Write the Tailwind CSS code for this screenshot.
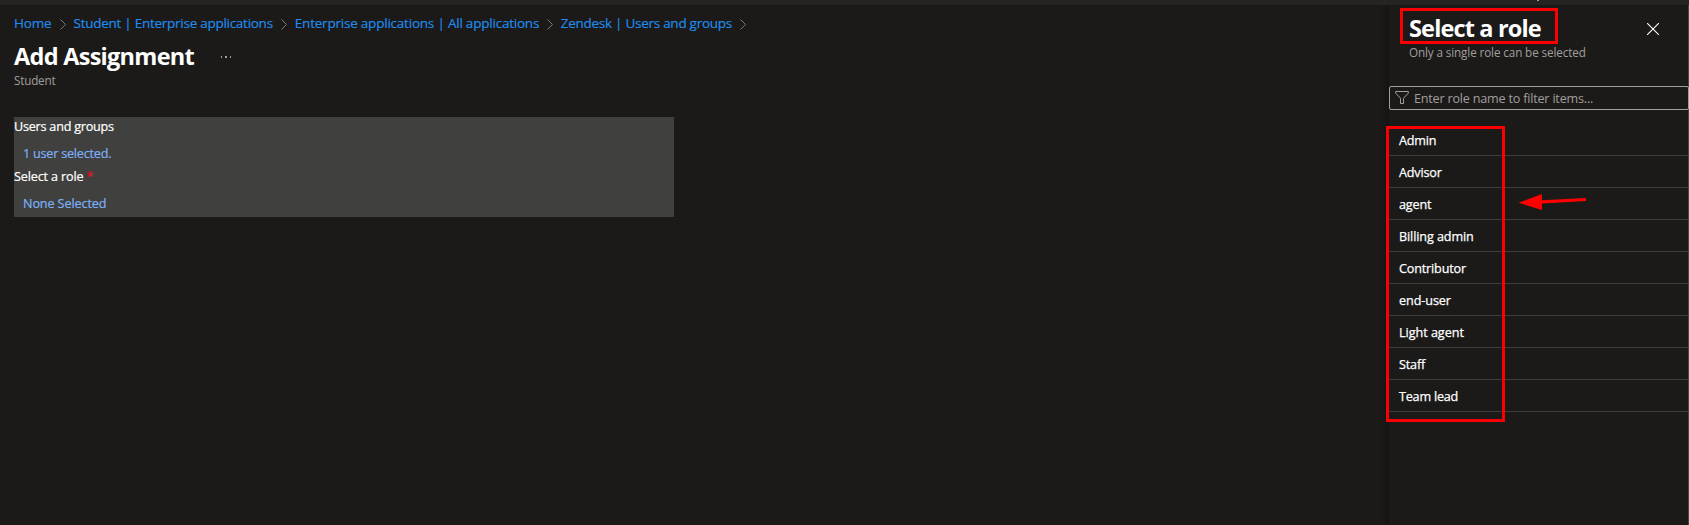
<!DOCTYPE html>
<html lang="en">
<head>
<meta charset="utf-8">
<title>Add Assignment</title>
<script src="https://cdn.jsdelivr.net/npm/@tailwindcss/browser@4"></script>
</head>
<body class="relative flex h-[525px] w-[1689px] flex-col overflow-hidden whitespace-nowrap bg-[#1b1a19] font-['Open_Sans',sans-serif] text-[12.6px] text-white">
  <header class="relative h-[5px] shrink-0 bg-[#252423]"><span class="absolute left-[1537px] top-0 h-px w-[2px] bg-[#a19f9d]"></span></header>
  <div class="flex flex-1">
    <main class="flex-1 pl-[14px] pt-[8px]">
      <nav class="flex h-5 items-center text-[13.5px] leading-5 tracking-[-0.27px] text-[#1f8ded] [-webkit-text-stroke:0.15px]">
        <a class="w-[46px] tracking-[-0.2px]">Home</a>
        <svg class="mt-[3px] h-[11px] w-[7px]" viewBox="0 0 7 11" fill="none" stroke="#797775"><path d="M.5.5l5 5-5 5"/></svg>
        <a class="ml-[6.6px] w-[207.4px]">Student | Enterprise applications</a>
        <svg class="mt-[3px] h-[11px] w-[7px]" viewBox="0 0 7 11" fill="none" stroke="#797775"><path d="M.5.5l5 5-5 5"/></svg>
        <a class="ml-[6.8px] w-[252.2px] tracking-[-0.215px]">Enterprise applications | All applications</a>
        <svg class="mt-[3px] h-[11px] w-[7px]" viewBox="0 0 7 11" fill="none" stroke="#797775"><path d="M.5.5l5 5-5 5"/></svg>
        <a class="ml-[6.8px] w-[179.2px]">Zendesk | Users and groups</a>
        <svg class="mt-[3px] h-[11px] w-[7px]" viewBox="0 0 7 11" fill="none" stroke="#797775"><path d="M.5.5l5 5-5 5"/></svg>
      </nav>
      <div class="mt-[8px] flex h-[30px] items-center">
        <h1 class="w-[207px] text-[23.5px] font-bold leading-[30px] tracking-[-0.72px]">Add Assignment</h1>
        <svg class="mt-[2px] h-[2px] w-[11px]" viewBox="0 0 11 2" fill="#a19f9d"><path d="M0 0h1v2H0zM4 0h2v2H4zM9 0h1v2H9z"/></svg>
      </div>
      <p class="text-[11.7px] leading-[19px] tracking-[-0.2px] text-[#a19f9d]">Student</p>
      <section class="mt-[27px] h-[100px] w-[660px] bg-[#40403e] pt-px leading-[18px] [-webkit-text-stroke:0.2px]">
        <div class="tracking-[-0.22px]">Users and groups</div>
        <div class="mt-[9px] pl-[9px] tracking-[-0.21px] text-[#7db0f7]">1 user selected.</div>
        <div class="mt-[5px] tracking-[-0.14px]">Select a role <span class="text-[#e81123]">*</span></div>
        <div class="mt-[9px] pl-[9px] tracking-[-0.1px] text-[#7db0f7]">None Selected</div>
      </section>
    </main>
    <aside class="w-[300px] border-r border-[#484644] shadow-[-1px_0_8px_rgba(0,0,0,0.45)]">
      <div class="flex justify-between pl-5 pr-[29px] pt-[8px]">
        <div>
          <h2 class="text-[23.5px] font-bold leading-[30px] tracking-[-0.85px]">Select a role</h2>
          <p class="text-[11.7px] leading-[19px] tracking-[-0.12px] text-[#a19f9d]">Only a single role can be selected</p>
        </div>
        <svg class="mt-[10px] h-3 w-3" viewBox="0 0 12 12" fill="none" stroke="#fff" stroke-width="1.1"><path d="M0 0l12 12M12 0L0 12"/></svg>
      </div>
      <div class="-mr-px mt-[24px] flex h-6 items-center rounded-[2px] border border-[#a19f9d] pl-[5px] tracking-[-0.2px] text-[#a19f9d]">
        <svg class="mb-[2px] h-[13px] w-[14px]" viewBox="0 0 14 13" fill="none" stroke="#a19f9d"><path d="M.7.5h12.6v1.7L8.5 7.3v5.2h-3V7.3L.7 2.2z"/></svg>
        <span class="ml-[5px] mt-[2px]">Enter role name to filter items...</span>
      </div>
      <ul class="mt-[14px] leading-[33px] tracking-[-0.16px] [-webkit-text-stroke:0.25px] *:h-8 *:border-b *:border-[#3f3e3c] *:pl-[10px]">
        <li>Admin</li>
        <li>Advisor</li>
        <li>agent</li>
        <li class="tracking-[-0.1px]">Billing admin</li>
        <li>Contributor</li>
        <li class="tracking-[-0.08px]">end-user</li>
        <li class="tracking-[-0.03px]">Light agent</li>
        <li>Staff</li>
        <li class="tracking-[-0.2px]">Team lead</li>
      </ul>
    </aside>
  </div>
  <div class="absolute left-[1400px] top-[8px] h-[36px] w-[158px] border-3 border-[#fb0003]"></div>
  <div class="absolute left-[1386px] top-[126px] h-[296px] w-[119px] border-3 border-[#fb0003]"></div>
  <svg class="absolute left-[1518px] top-[193px] h-[18px] w-[70px]" viewBox="0 0 70 18"><path fill="#ff0000" d="M.5 9.8L24 1v6.3L68 5v3L24 10.5V17z"/></svg>
</body>
</html>
